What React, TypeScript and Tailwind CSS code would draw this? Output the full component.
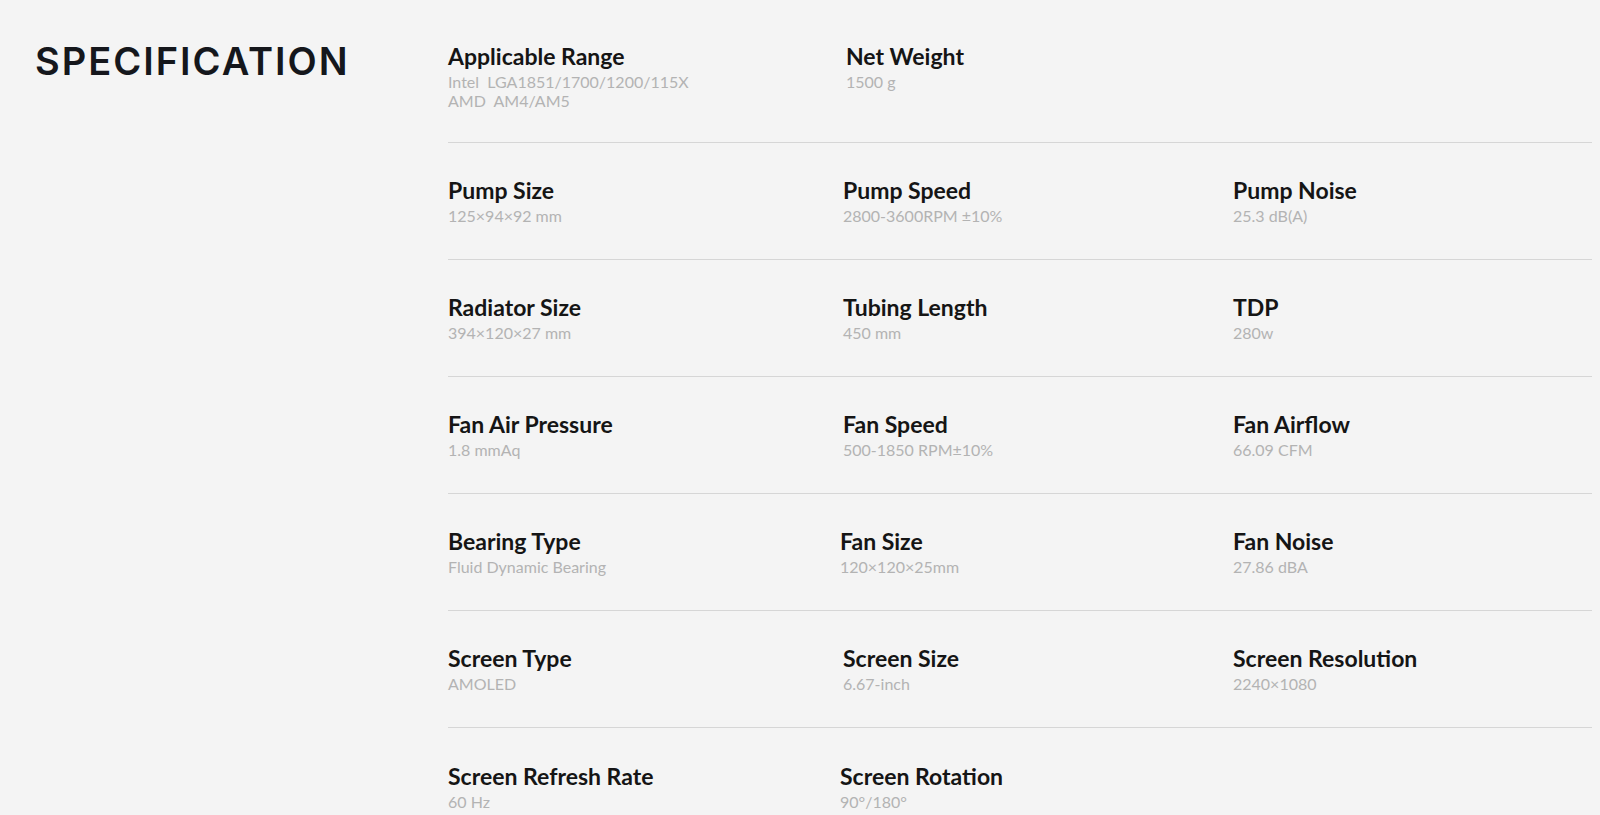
const rows: { label: string; value: string[]; shift?: string }[][] = [
  [
    { label: 'Applicable Range', value: ['Intel  LGA1851/1700/1200/115X', 'AMD  AM4/AM5'] },
    { label: 'Net Weight', value: ['1500 g'], shift: 'ml-[3px]' },
  ],
  [
    { label: 'Pump Size', value: ['125×94×92 mm'] },
    { label: 'Pump Speed', value: ['2800-3600RPM ±10%'] },
    { label: 'Pump Noise', value: ['25.3 dB(A)'] },
  ],
  [
    { label: 'Radiator Size', value: ['394×120×27 mm'] },
    { label: 'Tubing Length', value: ['450 mm'] },
    { label: 'TDP', value: ['280w'] },
  ],
  [
    { label: 'Fan Air Pressure', value: ['1.8 mmAq'] },
    { label: 'Fan Speed', value: ['500-1850 RPM±10%'] },
    { label: 'Fan Airflow', value: ['66.09 CFM'] },
  ],
  [
    { label: 'Bearing Type', value: ['Fluid Dynamic Bearing'] },
    { label: 'Fan Size', value: ['120×120×25mm'], shift: '-ml-[3px]' },
    { label: 'Fan Noise', value: ['27.86 dBA'] },
  ],
  [
    { label: 'Screen Type', value: ['AMOLED'] },
    { label: 'Screen Size', value: ['6.67-inch'] },
    { label: 'Screen Resolution', value: ['2240×1080'] },
  ],
  [
    { label: 'Screen Refresh Rate', value: ['60 Hz'] },
    { label: 'Screen Rotation', value: ['90°/180°'], shift: '-ml-[3px]' },
  ],
];

function SpecItem({ label, value, shift }: { label: string; value: string[]; shift?: string }) {
  return (
    <div className={shift}>
      <div className="text-[23px] leading-[28px] font-bold text-[#151515]">{label}</div>
      <div className="mt-[2px] text-[16px] leading-[19px] text-[#b3b3b3]">
        {value.map((v, i) => (
          <div key={i} className="whitespace-pre">
            {v}
          </div>
        ))}
      </div>
    </div>
  );
}

export default function App() {
  return (
    <div className="min-h-screen bg-[#f4f4f4] flex" style={{ fontFamily: 'Lato, "Noto Sans", sans-serif' }}>
      <div className="w-[448px] shrink-0 pl-[35px] pt-[38px]">
        <h1
          className="text-[38px] leading-[46px] font-semibold tracking-[2px] text-[#15171c]"
          style={{ fontFamily: 'Inter, "Liberation Sans", sans-serif' }}
        >
          SPECIFICATION
        </h1>
      </div>
      <div className="flex-1 mr-[8px]">
        {rows.map((row, i) => (
          <div
            key={i}
            className={
              i === 0
                ? 'grid grid-cols-[395px_390px_1fr] pt-[42px] pb-[32px] border-b border-[#d6d6d6]'
                : i === rows.length - 1
                ? 'grid grid-cols-[395px_390px_1fr] pt-[34px] pb-[34px]'
                : 'grid grid-cols-[395px_390px_1fr] pt-[33px] pb-[34px] border-b border-[#d6d6d6]'
            }
          >
            {row.map((item) => (
              <SpecItem key={item.label} {...item} />
            ))}
          </div>
        ))}
      </div>
    </div>
  );
}
